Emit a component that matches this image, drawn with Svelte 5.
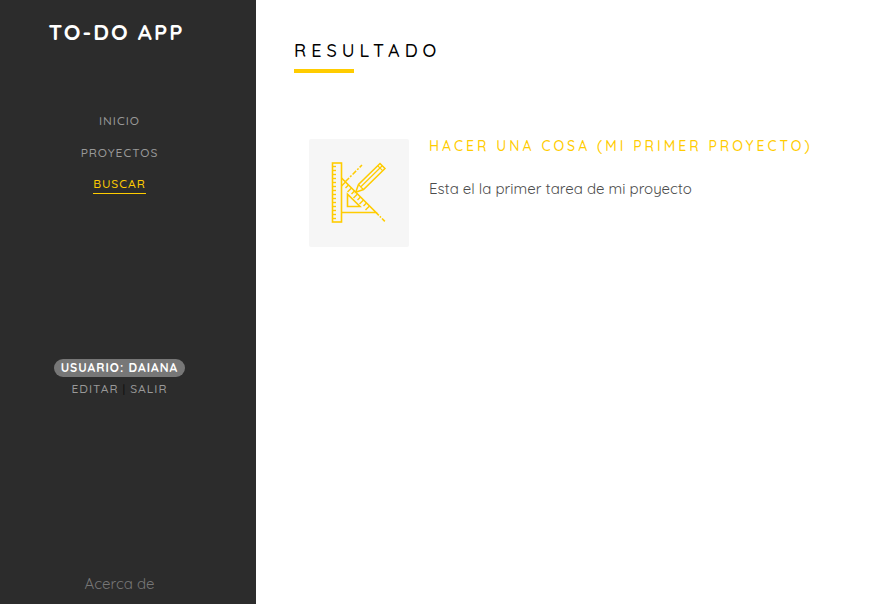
<script>
  const links = [
    { label: 'Inicio', active: false },
    { label: 'Proyectos', active: false },
    { label: 'Buscar', active: true }
  ];
  const results = [
    {
      title: 'Hacer una cosa (Mi primer proyecto)',
      text: 'Esta el la primer tarea de mi proyecto'
    }
  ];
  const rulerTicks = Array.from({ length: 14 }, (_, i) => 4 + i * 4);
  const edgeTicks = Array.from({ length: 9 }, (_, i) => 4 + i * 3);
</script>

<div class="page">
  <aside>
    <h1><a href="#inicio">TO-DO APP</a></h1>
    <nav>
      {#each links as link}
        <a href="#{link.label.toLowerCase()}" class:active={link.active}>{link.label}</a>
      {/each}
    </nav>
    <div class="user">
      <span class="badge">Usuario: Daiana</span>
      <div class="actions"><a href="#editar">Editar</a><span class="sep">|</span><a href="#salir">Salir</a></div>
    </div>
    <footer><a href="#acerca">Acerca de</a></footer>
  </aside>

  <main>
    <h2>Resultado</h2>
    {#each results as result}
      <article>
        <div class="thumb">
          <svg viewBox="0 1 56 62" width="56" height="62" fill="none" stroke="#ffcc00" stroke-width="1.6" aria-hidden="true">
            <rect x="1.5" y="2" width="9" height="59" />
            {#each rulerTicks as y}
              <path d="M1.5 {y + 1.5}h3.5" stroke-width="1.4" />
            {/each}
            <path d="M10.5 17L45 51.5H10.5" />
            {#each edgeTicks as d}
              <path d="M{10.5 + d} {17 + d}l{d % 2 ? -3 : -4} {d % 2 ? 3 : 4}" stroke-width="1.4" />
            {/each}
            <path d="M45 51.5l9.5 9.5" stroke-dasharray="4 1.5 1.5 1.5" />
            <path d="M14.5 20.5L31 4" stroke-dasharray="5 1.5 2 1.5" stroke-width="1.5" />
            <path d="M16.5 33.2V45.5H29Z" />
            <path d="M24.7 31.3l2.8-7.8L49 2.5l5 5-21.5 21Z" stroke-width="1.5" />
            <path d="M29.6 26L51 5M27.5 23.5l2 2.2 1 1 2 1.8M46.6 4.6l5 5" stroke-width="1.2" />
          </svg>
        </div>
        <div class="copy">
          <h3><a href="#tarea">{result.title}</a></h3>
          <p>{result.text}</p>
        </div>
      </article>
    {/each}
  </main>
</div>

<style>
  :global(body) {
    margin: 0;
    background: #fff;
    font-family: Quicksand, Lato, sans-serif;
  }
  a { color: inherit; text-decoration: none; }
  h1, h2, h3, p { margin: 0; }
  .page { display: flex; min-height: 100vh; }
  aside {
    box-sizing: border-box;
    width: 256px;
    flex: none;
    padding: 17px 17px 10px 0;
    background: #2c2c2c;
    color: #999;
    display: flex;
    flex-direction: column;
    align-items: center;
    text-align: center;
  }
  h1 {
    color: #fff;
    font-size: 22px;
    line-height: 30px;
    font-weight: 700;
    letter-spacing: 2px;
    padding-right: 6px;
  }
  nav {
    margin-top: 65px;
    display: flex;
    flex-direction: column;
    align-items: center;
    gap: 14px;
    font-size: 12px;
    line-height: 18px;
    font-weight: 500;
    letter-spacing: 1px;
    text-transform: uppercase;
  }
  nav a.active {
    color: #ffcc00;
    line-height: 16px;
    padding-bottom: 1px;
    border-bottom: 1px solid #ffcc00;
  }
  .user {
    margin-top: 165px;
    font-size: 12px;
    line-height: 18px;
    font-weight: 500;
    letter-spacing: 1px;
    text-transform: uppercase;
  }
  .badge {
    display: block;
    padding: 0 7px;
    border-radius: 9px;
    background: #777;
    color: #fff;
    font-weight: 700;
  }
  .actions { margin-top: 3px; }
  .sep { margin: 0 4px; color: #111; }
  footer { margin-top: auto; font-size: 15px; line-height: 20px; color: #777; }
  main { flex: 1; min-width: 0; padding: 39px 38px; }
  h2 {
    color: #000;
    font-size: 18px;
    line-height: 24px;
    font-weight: 500;
    letter-spacing: 5px;
    text-transform: uppercase;
  }
  h2::after {
    content: '';
    display: block;
    width: 60px;
    height: 4px;
    margin-top: 6px;
    background: #ffcc00;
  }
  article { display: flex; gap: 20px; margin: 66px 0 0 15px; }
  .thumb {
    width: 100px;
    height: 108px;
    flex: none;
    display: flex;
    align-items: center;
    justify-content: center;
    border-radius: 2px;
    background: #f6f6f6;
  }
  .copy { min-width: 0; }
  h3 {
    color: #ffcc00;
    font-size: 14px;
    line-height: 14px;
    font-weight: 500;
    letter-spacing: 3px;
    text-transform: uppercase;
  }
  p { margin-top: 26px; color: #4c4c4c; font-size: 15px; line-height: 20px; }
</style>
